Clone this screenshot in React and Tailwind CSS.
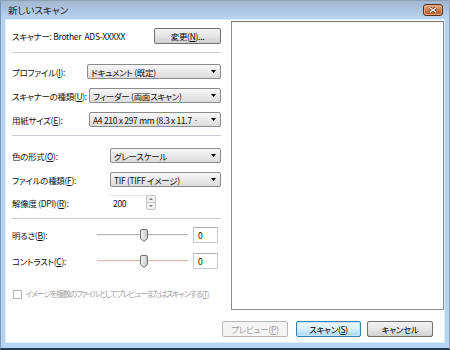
import React from "react";

const U = ({ children }) => <span className="underline">{children}</span>;

function Arrow() {
  return (
    <svg width="5" height="3" viewBox="0 0 5 3" className="shrink-0">
      <path d="M0 0h5L2.5 3z" fill="#000" />
    </svg>
  );
}

function Select({ className, children }) {
  return (
    <div
      className={
        "h-[15px] flex items-center justify-between rounded-[2px] border border-[#8b8b8b] bg-gradient-to-b from-[#f7f7f7] to-[#dcdcdc] pl-[3px] pr-[4px] gap-[2px] " +
        className
      }
    >
      <span className="whitespace-nowrap leading-[12px]">{children}</span>
      <Arrow />
    </div>
  );
}

function Thumb() {
  return (
    <svg width="8" height="13" viewBox="0 0 8 13" className="shrink-0">
      <defs>
        <linearGradient id="tg" x1="0" x2="1" y1="0" y2="0">
          <stop offset="0" stopColor="#f4f4f4" />
          <stop offset="1" stopColor="#c9c9c9" />
        </linearGradient>
      </defs>
      <path
        d="M2 0.5h4a1.5 1.5 0 0 1 1.5 1.5v7.5l-3.5 3l-3.5-3v-7.5a1.5 1.5 0 0 1 1.5-1.5z"
        fill="url(#tg)"
        stroke="#707070"
        strokeWidth="1"
      />
    </svg>
  );
}

function Slider({ track }) {
  return (
    <div className="w-[91px] h-[13px] flex items-center">
      <div className={"w-[43px] h-[2px] border-t " + track + " border-b border-b-[#f2f2f2]"} />
      <Thumb />
      <div className={"flex-1 h-[2px] border-t " + track + " border-b border-b-[#f2f2f2]"} />
    </div>
  );
}

function Row({ label, children, className = "" }) {
  return (
    <div className={"flex items-center justify-between " + className}>
      <span className="whitespace-nowrap leading-[12px]">{label}</span>
      {children}
    </div>
  );
}

function Btn({ kind, className, children }) {
  const styles = {
    normal:
      "border-[#707070] bg-gradient-to-b from-[#f3f3f3] via-[#e6e6e6] to-[#d0d0d0] text-black",
    primary:
      "border-[#3c7fb1] bg-gradient-to-b from-[#eaf6fd] via-[#d9f0fc] to-[#a7d9f5] text-black shadow-[inset_0_0_0_1px_#c4e5f6]",
    disabled: "border-[#b5b9bc] bg-[#f4f4f4] text-[#9c9c9c]",
  };
  return (
    <div
      className={
        "h-[16px] flex items-center justify-center rounded-[2px] border whitespace-nowrap leading-[12px] " +
        styles[kind] +
        " " +
        className
      }
    >
      {children}
    </div>
  );
}

export default function App() {
  return (
    <div className="w-[450px] h-[350px] flex flex-col bg-[#b7d3f2] border-l border-[#7a96b8] border-r border-r-[#8ea4bd] border-b-2 border-b-[#23384f] font-['Noto_Sans_CJK_JP',sans-serif] [font-feature-settings:'palt'] text-[8.5px] tracking-[-0.3px] text-[#111]">
      {/* title bar */}
      <div className="h-[19px] shrink-0 flex items-center justify-between bg-gradient-to-b from-[#a3b7cf] via-[#adc5e3] to-[#b9d3f2] border-t border-[#8aa0b8]">
        <span className="pl-[7px] text-[9.5px] tracking-normal text-[#1b1b1b] leading-[12px]">新しいスキャン</span>
        <div className="mr-[6px] w-[20px] h-[12px] rounded-[3px] border border-[#5c2f14] bg-gradient-to-b from-[#e6b08c] via-[#c97a4c] to-[#b35c2c] flex items-center justify-center shadow-[inset_0_0_0_1px_#e7a67e]">
          <svg width="8" height="6" viewBox="0 0 8 6">
            <path d="M1 0.8L7 5.2M7 0.8L1 5.2" stroke="#5a3520" strokeWidth="2.6" />
            <path d="M1 0.8L7 5.2M7 0.8L1 5.2" stroke="#ffffff" strokeWidth="1.3" />
          </svg>
        </div>
      </div>

      {/* client area */}
      <div className="flex-1 mx-[4px] mb-[5px] bg-white border border-[#d8eef9] flex flex-col">
        <div className="flex h-[290px]">
          {/* left column */}
          <div className="w-[215px] pl-[6px] pt-[8px] flex flex-col">
            <Row label={<>スキャナー: Brother&nbsp;&nbsp;ADS-XXXXX</>}>
              <Btn kind="normal" className="w-[67px]">
                変更(<U>N</U>)...
              </Btn>
            </Row>
            <div className="mt-[8px] border-t border-[#c7ced5]" />

            <Row label={<>プロファイル(<U>I</U>):</>} className="mt-[11px]">
              <Select className="w-[134px]">ドキュメント (既定)</Select>
            </Row>
            <Row label={<>スキャナーの種類(<U>U</U>):</>} className="mt-[9px]">
              <Select className="w-[132px]">フィーダー (両面スキャン)</Select>
            </Row>
            <Row label={<>用紙サイズ(<U>E</U>):</>} className="mt-[9px]">
              <Select className="w-[132px]">A4 210 x 297 mm (8.3 x 11.7 ·</Select>
            </Row>
            <div className="mt-[8px] border-t border-[#c7ced5]" />

            <Row label={<>色の形式(<U>O</U>):</>} className="mt-[12px]">
              <Select className="w-[111px]">グレースケール</Select>
            </Row>
            <Row label={<>ファイルの種類(<U>F</U>):</>} className="mt-[9px]">
              <Select className="w-[111px]">TIF (TIFF イメージ)</Select>
            </Row>
            <div className="mt-[8px] flex items-center">
              <span className="w-[96px] whitespace-nowrap leading-[12px]">
                解像度 (DPI)(<U>R</U>):
              </span>
              <div className="w-[38px] h-[15px] border-t border-[#e3e9ef] flex items-center pl-[5px] leading-[12px]">
                200
              </div>
              <div className="w-[10px] h-[15px] border border-[#c5c9cd] rounded-[2px] flex flex-col bg-[#f0f0f0]">
                <div className="flex-1 flex items-center justify-center border-b border-[#c5c9cd]">
                  <svg width="4" height="2" viewBox="0 0 4 2"><path d="M0 2h4L2 0z" fill="#7a7a7a" /></svg>
                </div>
                <div className="flex-1 flex items-center justify-center">
                  <svg width="4" height="2" viewBox="0 0 4 2"><path d="M0 0h4L2 2z" fill="#7a7a7a" /></svg>
                </div>
              </div>
            </div>
            <div className="mt-[8px] border-t border-[#c7ced5]" />

            <div className="mt-[8px] flex items-center">
              <span className="w-[85px] whitespace-nowrap leading-[12px]">
                明るさ(<U>B</U>):
              </span>
              <Slider track="border-t-[#b4b4b4]" />
              <div className="ml-[5px] w-[25px] h-[16px] border border-[#c8ccd0] border-t-[#a9b0b7] flex items-center pl-[4px] leading-[12px]">
                0
              </div>
            </div>
            <div className="mt-[10px] flex items-center">
              <span className="w-[85px] whitespace-nowrap leading-[12px]">
                コントラスト(<U>C</U>):
              </span>
              <Slider track="border-t-[#e4b8a8]" />
              <div className="ml-[5px] w-[25px] h-[16px] border border-[#c8ccd0] border-t-[#a9b0b7] flex items-center pl-[4px] leading-[12px]">
                0
              </div>
            </div>

            <div className="mt-[19px] flex items-center text-[#a2a2a2]">
              <div className="w-[9px] h-[9px] shrink-0 border border-[#b6b6b6] bg-white ml-[1px]" />
              <span className="ml-[3px] whitespace-nowrap leading-[12px] text-[8px] tracking-[-1.2px]">
                イメージを複数のファイルとしてプレビューまたはスキャンする(<U>T</U>)
              </span>
            </div>
          </div>

          {/* preview */}
          <div className="ml-[10px] mt-[1px] w-[213px] flex-1 max-w-[213px] border border-[#8c8c8c] border-t-[#6f6f6f] bg-white" />
        </div>

        {/* buttons */}
        <div className="mt-[11px] flex justify-end pr-[11px]">
          <Btn kind="disabled" className="w-[66px]">
            プレビュー(<U>P</U>)
          </Btn>
          <Btn kind="primary" className="w-[65px] ml-[8px]">
            スキャン(<U>S</U>)
          </Btn>
          <Btn kind="normal" className="w-[66px] ml-[6px]">
            キャンセル
          </Btn>
        </div>
      </div>
    </div>
  );
}
